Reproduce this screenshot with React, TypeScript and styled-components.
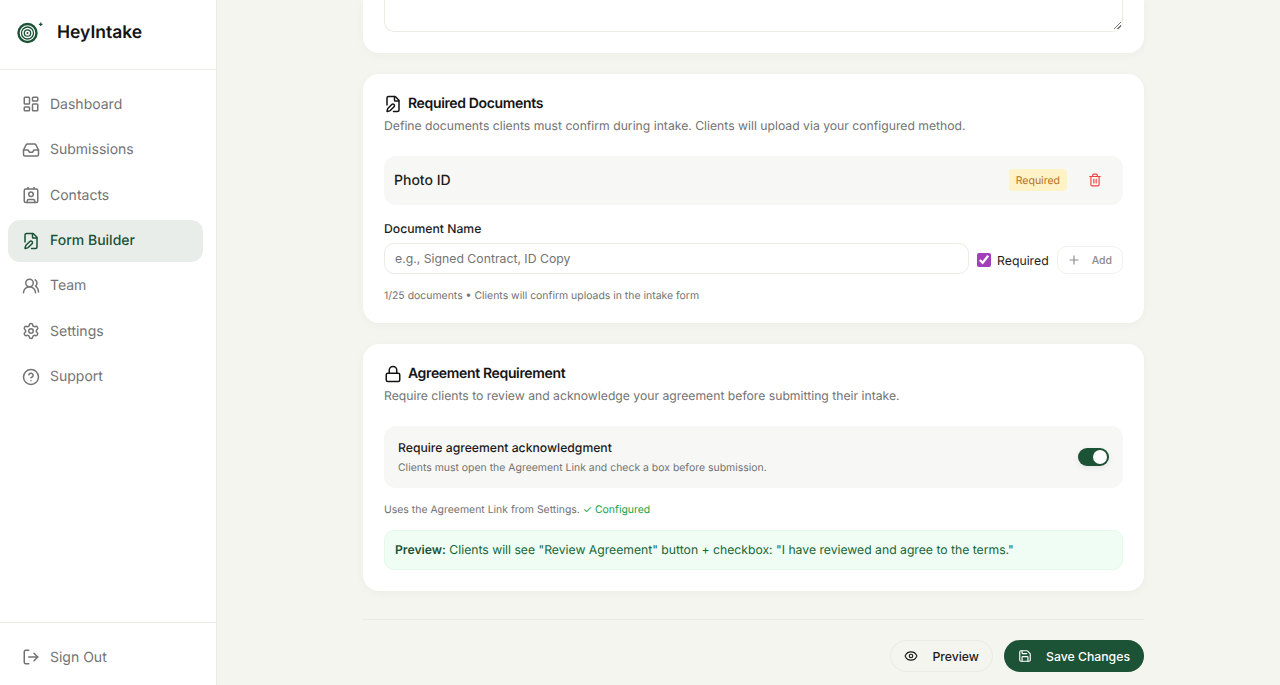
import { createGlobalStyle, styled } from 'styled-components';
import {
  CircleHelp,
  Contact,
  Eye,
  FilePen,
  Inbox,
  LayoutDashboard,
  Lock,
  LogOut,
  Plus,
  Save,
  Settings,
  Trash2,
  UsersRound,
} from 'lucide-react';

const GlobalStyle = createGlobalStyle`
  * { box-sizing: border-box; }
  html, body { margin: 0; height: 100%; }
  body {
    font-family: Inter, "Liberation Sans", sans-serif;
    background: #f5f5f0;
    color: #1c1c1c;
    text-rendering: geometricPrecision;
  }
  #root { height: 100%; }
`;

const navItems = [
  { label: 'Dashboard', icon: LayoutDashboard },
  { label: 'Submissions', icon: Inbox },
  { label: 'Contacts', icon: Contact },
  { label: 'Form Builder', icon: FilePen, active: true },
  { label: 'Team', icon: UsersRound },
  { label: 'Settings', icon: Settings },
  { label: 'Support', icon: CircleHelp },
];

const Logo = () => (
  <svg width="28" height="28" viewBox="0 0 28 28" fill="none">
    <circle cx="11.5" cy="15" r="9" stroke="#1c5236" strokeWidth="2.4" />
    <circle cx="11.5" cy="15" r="6" stroke="#1c5236" strokeWidth="1.3" />
    <circle cx="11.5" cy="15" r="3.2" stroke="#1c5236" strokeWidth="1.3" />
    <circle cx="11.5" cy="15" r="1" fill="#1c5236" />
    <path d="M24.7 4.5v3.6M22.9 6.3h3.6" stroke="#1c5236" strokeWidth="1.2" />
  </svg>
);

const App = () => {
  return (
    <Page>
      <GlobalStyle />
      <Sidebar>
        <Brand>
          <Logo />
          <BrandName>HeyIntake</BrandName>
        </Brand>
        <Nav>
          {navItems.map(({ label, icon: Icon, active }) => (
            <NavItem key={label} $active={active}>
              <Icon size={18} strokeWidth={2} />
              {label}
            </NavItem>
          ))}
        </Nav>
        <SidebarFooter>
          <NavItem>
            <LogOut size={18} strokeWidth={2} />
            Sign Out
          </NavItem>
        </SidebarFooter>
      </Sidebar>
      <Main>
        <Column>
          <ClippedCard>
            <TextareaStub />
          </ClippedCard>

          <Card>
            <CardTitle>
              <FilePen size={18} strokeWidth={2} />
              Required Documents
            </CardTitle>
            <CardHint>Define documents clients must confirm during intake. Clients will upload via your configured method.</CardHint>
            <DocRow>
              <DocName>Photo ID</DocName>
              <RequiredBadge>Required</RequiredBadge>
              <DeleteButton>
                <Trash2 size={14} strokeWidth={2} />
              </DeleteButton>
            </DocRow>
            <FieldLabel>Document Name</FieldLabel>
            <AddRow>
              <TextInput placeholder="e.g., Signed Contract, ID Copy" />
              <CheckLabel>
                <CheckInput type="checkbox" defaultChecked />
                Required
              </CheckLabel>
              <AddButton>
                <Plus size={14} strokeWidth={2} />
                Add
              </AddButton>
            </AddRow>
            <SmallNote>1/25 documents • Clients will confirm uploads in the intake form</SmallNote>
          </Card>

          <Card>
            <CardTitle>
              <Lock size={18} strokeWidth={2} />
              Agreement Requirement
            </CardTitle>
            <CardHint>Require clients to review and acknowledge your agreement before submitting their intake.</CardHint>
            <ToggleRow>
              <div>
                <ToggleTitle>Require agreement acknowledgment</ToggleTitle>
                <ToggleHint>Clients must open the Agreement Link and check a box before submission.</ToggleHint>
              </div>
              <Toggle />
            </ToggleRow>
            <LinkNote>
              Uses the Agreement Link from Settings. <Configured>✓ Configured</Configured>
            </LinkNote>
            <PreviewBox>
              <strong>Preview:</strong> Clients will see "Review Agreement" button + checkbox: "I have reviewed and agree to the terms."
            </PreviewBox>
          </Card>

          <Actions>
            <PreviewButton>
              <Eye size={14} strokeWidth={2} />
              Preview
            </PreviewButton>
            <SaveButton>
              <Save size={14} strokeWidth={2} />
              Save Changes
            </SaveButton>
          </Actions>
        </Column>
      </Main>
    </Page>
  );
};

const Page = styled.div`
  display: flex;
  height: 685px;
  overflow: hidden;
`;

const Sidebar = styled.aside`
  width: 217px;
  flex-shrink: 0;
  display: flex;
  flex-direction: column;
  background: #fff;
  border-right: 1px solid #ebebe6;
`;

const Brand = styled.div`
  height: 70px;
  display: flex;
  align-items: center;
  gap: 13px;
  padding: 0 0 5px 16px;
  border-bottom: 1px solid #ebebe6;
`;

const BrandName = styled.span`
  font-size: 17.5px;
  font-weight: 600;
  color: #141414;
`;

const Nav = styled.nav`
  flex: 1;
  display: flex;
  flex-direction: column;
  gap: 3.4px;
  padding: 13.4px 13px 0 8px;
`;

const NavItem = styled.div<{ $active?: boolean }>`
  height: 42px;
  display: flex;
  align-items: center;
  gap: 10px;
  padding: 0 14px;
  border-radius: 12px;
  font-size: 14px;
  font-weight: ${({ $active }) => ($active ? 500 : 400)};
  color: ${({ $active }) => ($active ? '#1c5236' : '#737373')};
  background: ${({ $active }) => ($active ? '#e8ede9' : 'transparent')};
`;

const SidebarFooter = styled.div`
  height: 63px;
  padding: 13px 13px 0 8px;
  border-top: 1px solid #ebebe6;
`;

const Main = styled.main`
  flex: 1;
  min-width: 0;
  overflow: hidden;
`;

const Column = styled.div`
  width: 781px;
  margin-left: 146px;
  display: flex;
  flex-direction: column;
  gap: 21px;
`;

const Card = styled.section`
  background: #fff;
  border-radius: 16px;
  padding: 20px 21px 21px;
  box-shadow: 0 2px 10px rgba(40, 40, 20, 0.035);
`;

const ClippedCard = styled(Card)`
  height: 53px;
  padding: 0 21px;
  border-radius: 0 0 16px 16px;
`;

const TextareaStub = styled.div`
  height: 32px;
  position: relative;
  border: 1px solid #ebebe6;
  border-top: 0;
  border-radius: 0 0 10px 10px;

  &::after {
    content: '';
    position: absolute;
    right: 1px;
    bottom: 2px;
    width: 7px;
    height: 7px;
    background: linear-gradient(135deg, transparent 45%, #777 45%, #777 55%, transparent 55%, transparent 70%, #777 70%, #777 80%, transparent 80%);
  }
`;

const CardTitle = styled.h2`
  margin: 0;
  display: flex;
  align-items: center;
  gap: 6px;
  font-size: 14px;
  line-height: 20px;
  font-weight: 600;
  letter-spacing: -0.35px;
  color: #141414;
`;

const CardHint = styled.p`
  margin: 2px 0 0;
  font-size: 12.2px;
  line-height: 20px;
  color: #737373;
`;

const DocRow = styled.div`
  margin-top: 20px;
  height: 49px;
  display: flex;
  align-items: center;
  padding: 0 21px 1px 10px;
  background: #f7f7f5;
  border-radius: 12px;
`;

const DocName = styled.span`
  flex: 1;
  font-size: 14px;
  font-weight: 500;
`;

const RequiredBadge = styled.span`
  height: 22px;
  display: flex;
  align-items: center;
  padding: 0 7px;
  border-radius: 4px;
  background: #fef3c7;
  color: #b8701c;
  font-size: 10.5px;
`;

const DeleteButton = styled.button`
  display: flex;
  margin-left: 21px;
  padding: 0;
  border: 0;
  background: none;
  color: #ef4444;
`;

const FieldLabel = styled.label`
  display: block;
  margin-top: 14px;
  font-size: 12.2px;
  line-height: 20px;
  font-weight: 500;
`;

const AddRow = styled.div`
  margin-top: 4px;
  display: flex;
  align-items: flex-end;
  gap: 8px;
`;

const TextInput = styled.input`
  flex: 1;
  min-width: 0;
  height: 31px;
  padding: 0 10px;
  border: 1px solid #ebebe6;
  border-radius: 10px;
  font: inherit;
  font-size: 12.25px;
  outline: none;

  &::placeholder {
    color: #737373;
  }
`;

const CheckLabel = styled.label`
  height: 28px;
  display: flex;
  align-items: center;
  gap: 6px;
  font-size: 12.25px;
`;

const CheckInput = styled.input`
  width: 14px;
  height: 14px;
  margin: 0;
  accent-color: #a23fbd;
`;

const AddButton = styled.button`
  height: 28px;
  display: flex;
  align-items: center;
  gap: 11px;
  padding: 0 10px 0 9px;
  border: 1px solid #f0f0ec;
  border-radius: 10px;
  background: #fff;
  font: inherit;
  font-size: 10.5px;
  font-weight: 500;
  color: #8c8c8c;
`;

const SmallNote = styled.p`
  margin: 16px 0 0;
  font-size: 10.44px;
  line-height: 12px;
  color: #737373;
`;

const ToggleRow = styled.div`
  margin-top: 20px;
  height: 62px;
  display: flex;
  align-items: center;
  justify-content: space-between;
  padding: 0 14px;
  background: #f7f7f5;
  border-radius: 12px;
`;

const ToggleTitle = styled.div`
  margin-top: 1px;
  font-size: 12.2px;
  line-height: 18px;
  font-weight: 500;
`;

const ToggleHint = styled.div`
  margin-top: 3px;
  font-size: 10.44px;
  line-height: 16px;
  color: #737373;
`;

const Toggle = styled.span`
  position: relative;
  width: 31px;
  height: 18px;
  border-radius: 9px;
  background: #1c5236;
  box-shadow: 0 2px 6px rgba(0, 0, 0, 0.08);

  &::after {
    content: '';
    position: absolute;
    top: 2px;
    right: 2px;
    width: 14px;
    height: 14px;
    border-radius: 50%;
    background: #fff;
  }
`;

const LinkNote = styled.p`
  margin: 14px 0 0;
  font-size: 10.44px;
  line-height: 16px;
  color: #737373;
`;

const Configured = styled.span`
  font-family: Inter, "DejaVu Sans", sans-serif;
  color: #16a34a;
`;

const PreviewBox = styled.div`
  margin-top: 12px;
  height: 40px;
  display: flex;
  align-items: center;
  white-space: pre-wrap;
  padding: 0 10px 1px;
  background: #f0fdf4;
  border: 1px solid #e3f9ea;
  border-radius: 10px;
  font-size: 12.2px;
  color: #166534;

  strong {
    font-weight: 600;
    color: #1c5236;
  }
`;

const Actions = styled.div`
  margin-top: 7px;
  padding-top: 20px;
  display: flex;
  justify-content: flex-end;
  gap: 11px;
  border-top: 1px solid #ebebe6;
`;

const PreviewButton = styled.button`
  height: 32px;
  display: flex;
  align-items: center;
  gap: 14px;
  padding: 0 13px;
  border: 1px solid #ebebe6;
  border-radius: 16px;
  background: #f5f5f0;
  font: inherit;
  font-size: 12.25px;
  font-weight: 500;
  color: #1c1c1c;
`;

const SaveButton = styled(PreviewButton)`
  padding: 0 14px;
  border: 0;
  background: #1c5236;
  color: #fff;
`;

export default App;
